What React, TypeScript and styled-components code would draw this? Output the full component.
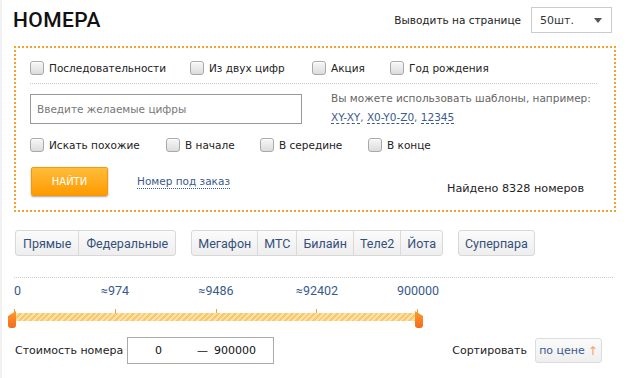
import React from 'react';
import styled, { createGlobalStyle } from 'styled-components';

const Global = createGlobalStyle`
  html, body { margin: 0; padding: 0; background: #fff; }
  body { font-family: "DejaVu Sans", Tahoma, sans-serif; font-size: 10.5px; color: #222; }
  * { box-sizing: border-box; }
`;

const BLUE = '#3a5a8c';

const Page = styled.div`
  width: 640px;
  height: 378px;
  padding-left: 12px;
  border-left: 2px solid #f1f1f1;
  overflow: hidden;
  white-space: nowrap;
`;

const Header = styled.div`
  display: flex;
  align-items: center;
  justify-content: space-between;
  height: 40px;
  width: 598px;
`;

const Title = styled.h1`
  margin: 0 0 0 -1px;
  font-family: Roboto, "DejaVu Sans", sans-serif;
  font-weight: 500;
  font-size: 21px;
  letter-spacing: 0.4px;
  color: #111;
`;

const PerPage = styled.div`
  display: flex;
  align-items: center;
  gap: 10px;
  font-size: 10.5px;
  color: #222;
`;

const Select = styled.div`
  width: 81px;
  height: 26px;
  border: 1px solid #ccc;
  display: flex;
  align-items: center;
  justify-content: space-between;
  padding: 0 9px 0 8px;
  font-size: 11px;
  color: #333;
`;

const Caret = styled.span`
  width: 0;
  height: 0;
  border-left: 4px solid transparent;
  border-right: 4px solid transparent;
  border-top: 5px solid #555;
`;

const FilterBox = styled.div`
  margin-top: 6px;
  width: 602px;
  height: 166px;
  border: 2px dotted #f5a32a;
  padding: 11px 16px 0 14px;
`;

const Row = styled.div<{ $mt?: number }>`
  display: flex;
  align-items: center;
  height: 18px;
  margin-top: ${(p) => p.$mt ?? 0}px;
`;

const Check = styled.label<{ $w?: number }>`
  display: inline-flex;
  align-items: center;
  gap: 5px;
  width: ${(p) => (p.$w ? `${p.$w}px` : 'auto')};
  font-size: 10.5px;
  color: #222;
`;

const Box = styled.span`
  width: 14px;
  height: 14px;
  flex: none;
  border: 1px solid #a9a9a9;
  border-radius: 3px;
  background: linear-gradient(#f7f7f7, #dcdcdc);
  box-shadow: inset 0 1px 0 #fff;
`;

const Separator = styled.div<{ $w: number; $mt: number }>`
  width: ${(p) => p.$w}px;
  margin-top: ${(p) => p.$mt}px;
  border-top: 1px dotted #c8c8c8;
`;

const InputRow = styled.div`
  display: flex;
  margin-top: 10px;
  height: 30px;
`;

const TextInput = styled.div`
  width: 272px;
  height: 30px;
  flex: none;
  border: 1px solid #999;
  display: flex;
  align-items: center;
  padding-left: 6px;
  color: #777;
  font-size: 10.5px;
`;

const Hint = styled.div`
  margin: -5px 0 0 29px;
  line-height: 19px;
  color: #666;
  font-size: 10.5px;
`;

const Tpl = styled.span`
  color: ${BLUE};
  border-bottom: 1px dashed ${BLUE};
`;

const ActionRow = styled.div`
  display: flex;
  align-items: center;
  margin-top: 13px;
  height: 29px;
`;

const FindButton = styled.button`
  width: 77px;
  height: 29px;
  margin-left: 1px;
  border: 1px solid #f39a0a;
  border-radius: 2px;
  background: linear-gradient(#ffbd3a, #ff9a00);
  box-shadow: 0 1px 2px rgba(0, 0, 0, 0.35);
  color: #fff;
  font-family: "DejaVu Sans", sans-serif;
  font-size: 10px;
  text-transform: uppercase;
`;

const OrderLink = styled.a`
  margin-left: 29px;
  color: ${BLUE};
  font-size: 10.5px;
  border-bottom: 1px dotted ${BLUE};
  line-height: 13px;
`;

const Found = styled.div`
  margin: 14px 14px 0 auto;
  font-size: 11.2px;
  color: #222;
`;

const Tabs = styled.div`
  display: flex;
  gap: 15px;
  margin: 18px 0 0 1px;
  height: 26px;
`;

const Group = styled.div<{ $ml?: number }>`
  display: flex;
  margin-left: ${(p) => p.$ml ?? 0}px;
  border: 1px solid #d8d8d8;
  border-radius: 3px;
  background: linear-gradient(#fbfbfb, #eeeeee);
  overflow: hidden;
`;

const Tab = styled.div<{ $px?: number }>`
  display: flex;
  align-items: center;
  padding: 0 ${(p) => p.$px ?? 6}px;
  font-family: Roboto, sans-serif;
  font-size: 12.5px;
  color: #34507a;
  & + & { border-left: 1px solid #dadada; }
`;

const Dotted = styled.div`
  width: 599px;
  margin-top: 21px;
  border-top: 1px dotted #cfcfcf;
`;

const Scale = styled.div`
  display: flex;
  justify-content: space-between;
  width: 404px;
  margin-top: 6px;
  height: 14px;
`;

const ScaleLabel = styled.div<{ $first?: boolean }>`
  width: 0;
  display: flex;
  justify-content: ${(p) => (p.$first ? 'flex-start' : 'center')};
  font-family: Roboto, sans-serif;
  font-size: 12.5px;
  line-height: 14px;
  color: ${BLUE};
`;

const Slider = styled.div`
  position: relative;
  width: 404px;
  margin-top: 11px;
`;

const Ticks = styled.div`
  display: flex;
  justify-content: space-between;
  height: 4px;
`;

const Tick = styled.span`
  width: 1px;
  height: 4px;
  background: #e5a544;
`;

const Track = styled.div`
  height: 8px;
  background: repeating-linear-gradient(135deg, #fbc76b 0 2px, #fde1a9 2px 4px);
`;

const Handle = styled.div<{ $side: 'left' | 'right' }>`
  position: absolute;
  top: 2px;
  ${(p) => (p.$side === 'left' ? 'left: -6px;' : 'right: -5px;')}
  width: 8px;
  height: 17px;
  background: linear-gradient(#ff9a2e, #f26c1c);
  border-radius: 0 0 3px 3px;
  clip-path: ${(p) =>
    p.$side === 'left'
      ? 'polygon(0 30%, 100% 0, 100% 100%, 0 100%)'
      : 'polygon(0 0, 100% 30%, 100% 100%, 0 100%)'};
`;

const BottomRow = styled.div`
  display: flex;
  align-items: center;
  width: 588px;
  margin-top: 16px;
  height: 27px;
`;

const PriceLabel = styled.div`
  width: 112px;
  margin-left: 1px;
  font-size: 11px;
  color: #222;
`;

const PriceBox = styled.div`
  width: 147px;
  height: 27px;
  border: 1px solid #aaa;
  display: flex;
  align-items: center;
  padding-left: 27px;
  font-size: 11px;
  color: #111;
`;

const Dash = styled.span`
  margin: 0 6px 0 35px;
`;

const SortLabel = styled.div`
  margin-left: auto;
  font-size: 11px;
  color: #222;
`;

const SortButton = styled.div`
  margin-left: 8px;
  width: 67px;
  height: 25px;
  border: 1px solid #dcdcdc;
  border-radius: 3px;
  background: linear-gradient(#fafafa, #efefef);
  display: flex;
  align-items: center;
  justify-content: center;
  gap: 3px;
  font-size: 11px;
  color: ${BLUE};
`;

const Arrow = styled.span`
  color: #f6a066;
  font-size: 12px;
`;

export default function App() {
  const labels = ['0', '≈974', '≈9486', '≈92402', '900000'];
  return (
    <>
      <Global />
      <Page>
        <Header>
          <Title>НОМЕРА</Title>
          <PerPage>
            Выводить на странице
            <Select>
              50шт.
              <Caret />
            </Select>
          </PerPage>
        </Header>

        <FilterBox>
          <Row>
            <Check $w={160}><Box />Последовательности</Check>
            <Check $w={122}><Box />Из двух цифр</Check>
            <Check $w={78}><Box />Акция</Check>
            <Check><Box />Год рождения</Check>
          </Row>
          <Separator $w={567} $mt={6} />
          <InputRow>
            <TextInput>Введите желаемые цифры</TextInput>
            <Hint>
              Вы можете использовать шаблоны, например:
              <br />
              <Tpl>XY-XY</Tpl>, <Tpl>X0-Y0-Z0</Tpl>, <Tpl>12345</Tpl>
            </Hint>
          </InputRow>
          <Row $mt={12}>
            <Check $w={136}><Box />Искать похожие</Check>
            <Check $w={94}><Box />В начале</Check>
            <Check $w={108}><Box />В середине</Check>
            <Check><Box />В конце</Check>
          </Row>
          <ActionRow>
            <FindButton>Найти</FindButton>
            <OrderLink>Номер под заказ</OrderLink>
            <Found>Найдено 8328 номеров</Found>
          </ActionRow>
        </FilterBox>

        <Tabs>
          <Group>
            <Tab $px={7}>Прямые</Tab>
            <Tab $px={7}>Федеральные</Tab>
          </Group>
          <Group>
            <Tab>Мегафон</Tab>
            <Tab>МТС</Tab>
            <Tab>Билайн</Tab>
            <Tab>Теле2</Tab>
            <Tab>Йота</Tab>
          </Group>
          <Group>
            <Tab>Суперпара</Tab>
          </Group>
        </Tabs>

        <Dotted />

        <Scale>
          {labels.map((l, i) => (
            <ScaleLabel key={l} $first={i === 0}>{l}</ScaleLabel>
          ))}
        </Scale>

        <Slider>
          <Ticks>
            {labels.map((l) => (
              <Tick key={l} />
            ))}
          </Ticks>
          <Track />
          <Handle $side="left" />
          <Handle $side="right" />
        </Slider>

        <BottomRow>
          <PriceLabel>Стоимость номера</PriceLabel>
          <PriceBox>
            0<Dash>—</Dash>900000
          </PriceBox>
          <SortLabel>Сортировать</SortLabel>
          <SortButton>
            по цене <Arrow>↑</Arrow>
          </SortButton>
        </BottomRow>
      </Page>
    </>
  );
}
